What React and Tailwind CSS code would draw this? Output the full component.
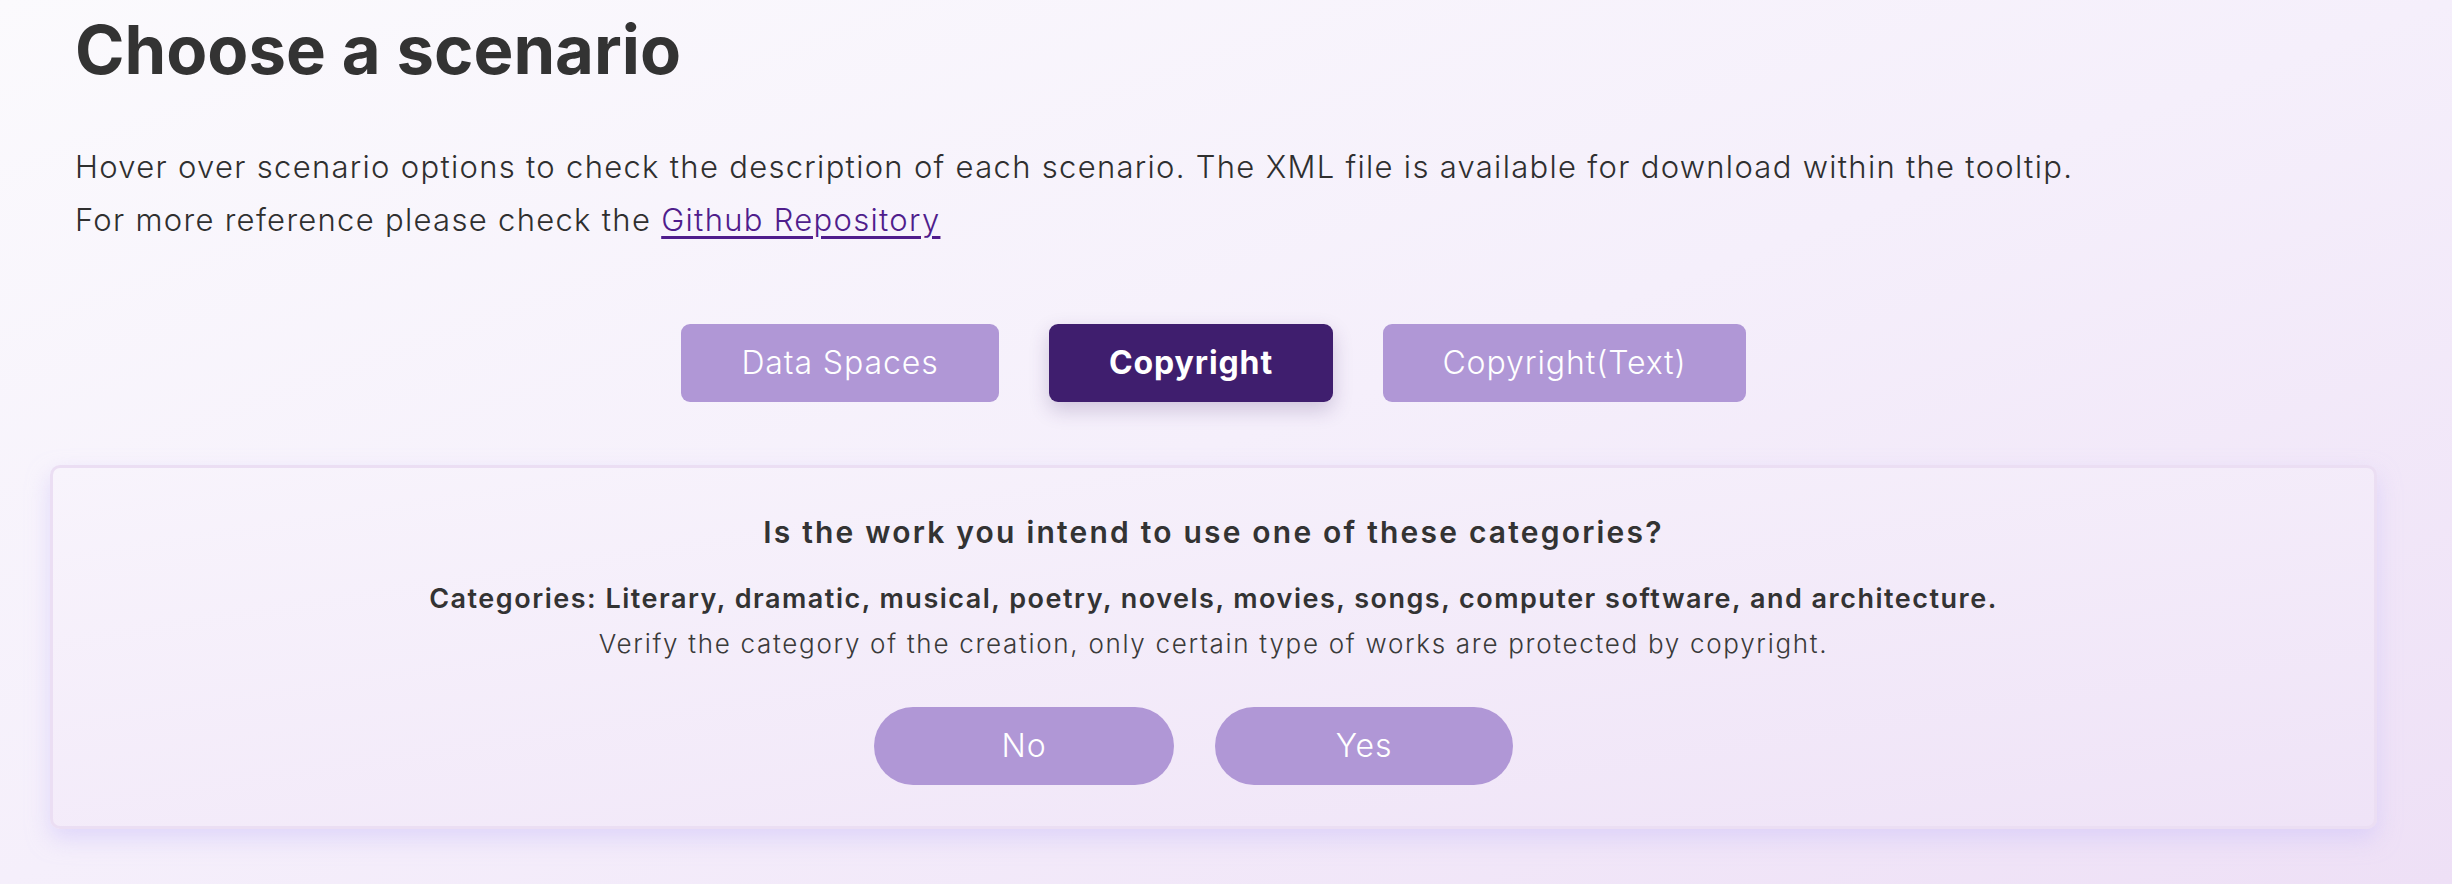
import React from "react";

const font = { fontFamily: "Inter, 'Noto Sans', sans-serif" };

function ScenarioButton({ label, active, width }) {
  return (
    <button
      className={
        "mx-[25px] h-[78px] rounded-[9px] text-white text-[32px] tracking-[0.9px] " +
        (active
          ? "bg-[#3f1e6e] font-bold shadow-[0_8px_20px_rgba(70,40,110,0.22)]"
          : "bg-[#b097d6] font-light")
      }
      style={{ width }}
    >
      {label}
    </button>
  );
}

export default function App() {
  return (
    <div
      className="w-full h-[884px] overflow-hidden bg-gradient-to-br from-[#fbfafd] via-[#f5effb] to-[#eee0f6] text-[#333333]"
      style={font}
    >
      <div className="ml-[50px] mr-[75px]">
        <h1 className="pl-[25px] mt-[10px] text-[67px] leading-[80px] font-bold text-[#333333]">
          Choose a scenario
        </h1>
        <div className="pl-[25px] mt-[50px] text-[31px] leading-[53px] font-light tracking-[1.3px] text-[#2f2f2f]">
          <p>
            Hover over scenario options to check the description of each scenario. The XML file is available for download within the tooltip.
          </p>
          <p>
            For more reference please check the{" "}
            <a href="#" className="text-[#4f1d8c] underline underline-offset-[5px] decoration-[3px]">
              Github Repository
            </a>
          </p>
        </div>
        <div className="mt-[78px] flex justify-center">
          <ScenarioButton label="Data Spaces" width={318} />
          <ScenarioButton label="Copyright" active width={284} />
          <ScenarioButton label="Copyright(Text)" width={363} />
        </div>
        <div className="mt-[63px] h-[364px] rounded-[10px] border-[3px] border-[#ebdef3] bg-gradient-to-br from-[#f8f4fc] to-[#efe3f7] shadow-[0_10px_22px_rgba(205,195,250,0.55)] pt-[44px] text-center">
          <div className="text-[30px] leading-[40px] font-semibold tracking-[2.2px] text-[#333333]">
            Is the work you intend to use one of these categories?
          </div>
          <div className="mt-[31px] text-[27px] leading-[32px] font-semibold tracking-[1.5px] text-[#333333]">
            Categories: Literary, dramatic, musical, poetry, novels, movies, songs, computer software, and architecture.
          </div>
          <div className="mt-[13px] text-[26px] leading-[32px] font-light tracking-[1.7px] text-[#3a3a3a]">
            Verify the category of the creation, only certain type of works are protected by copyright.
          </div>
          <div className="mt-[47px] flex justify-center">
            <button className="mr-[41px] w-[300px] h-[78px] rounded-full bg-[#b097d6] text-white text-[32px] tracking-[0.9px] font-light">
              No
            </button>
            <button className="mr-[40px] w-[298px] h-[78px] rounded-full bg-[#b097d6] text-white text-[32px] tracking-[0.9px] font-light">
              Yes
            </button>
          </div>
        </div>
      </div>
    </div>
  );
}
